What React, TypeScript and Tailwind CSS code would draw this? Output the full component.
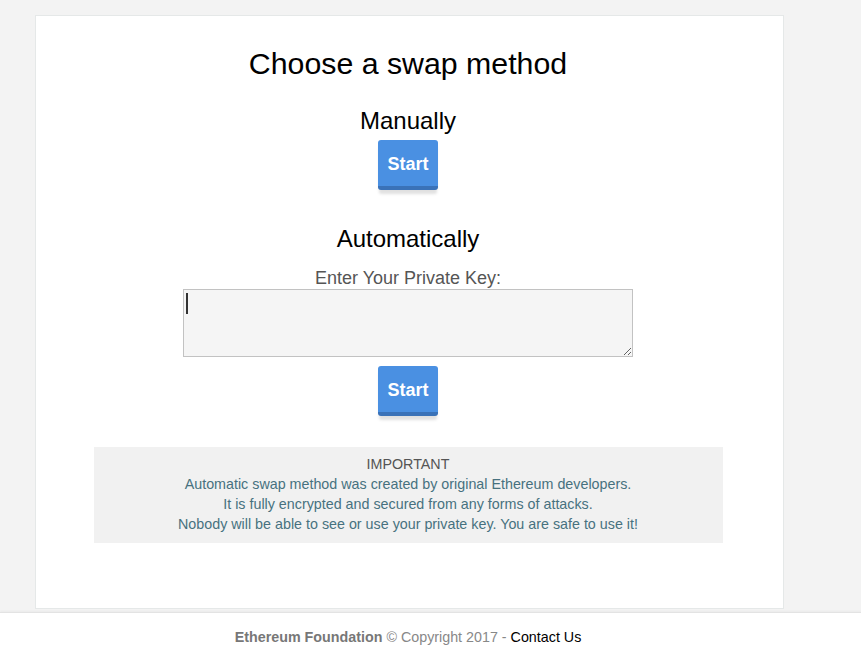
const StartButton = () => (
  <button
    type="button"
    className="w-[60px] h-[50px] pt-[3px] rounded-[3px] bg-[#4a90e2] border-b-4 border-[#3a72b8] text-white font-bold text-[18px] shadow-[0_5px_3px_-1px_rgba(0,0,0,0.12)]"
  >
    Start
  </button>
);

export default function App() {
  return (
    <div className="min-h-[653px] bg-[#f3f3f3] flex flex-col font-['Liberation_Sans',Arial,sans-serif]">
      <div className="mt-[15px] ml-[35px] w-[749px] h-[594px] pr-[3px] bg-white border border-[#e5e8e8] flex flex-col items-center">
        <h1 className="mt-[31px] text-[30.3px] leading-[33px] text-black">Choose a swap method</h1>

        <h2 className="mt-[27px] text-[24px] leading-[28px] text-black">Manually</h2>
        <div className="mt-[5px]">
          <StartButton />
        </div>

        <h2 className="mt-[35px] text-[24px] leading-[28px] text-black">Automatically</h2>
        <label className="mt-[15px] text-[18px] leading-[20px] text-[#555]">Enter Your Private Key:</label>
        <div className="relative mt-[1px]">
          <textarea className="block w-[450px] h-[68px] bg-[#f5f5f5] border border-[#c2c2c2] outline-none resize" />
          <div className="absolute left-[3px] top-[4px] w-[2px] h-[21px] bg-[#333]" />
        </div>
        <div className="mt-[9px]">
          <StartButton />
        </div>

        <div className="mt-[31px] w-[629px] bg-[#f1f1f1] pt-[7px] pb-[9px] text-center text-[14.3px] leading-[20px]">
          <p className="text-[#555]">IMPORTANT</p>
          <p className="text-[#47717f]">Automatic swap method was created by original Ethereum developers.</p>
          <p className="text-[#47717f]">It is fully encrypted and secured from any forms of attacks.</p>
          <p className="text-[#47717f]">Nobody will be able to see or use your private key. You are safe to use it!</p>
        </div>
      </div>

      <footer className="mt-[3px] flex-1 bg-white border-t border-[#e3e3e3] shadow-[0_-1px_2px_rgba(0,0,0,0.04)]">
        <div className="ml-[35px] w-[749px] pr-[3px] pt-[15px] pb-[12px] text-center text-[14.3px] leading-[18px]">
          <span className="font-bold text-[#777]">Ethereum Foundation</span>
          <span className="text-[#888]"> © Copyright 2017 - </span>
          <span className="text-black">Contact Us</span>
        </div>
      </footer>
    </div>
  );
}
